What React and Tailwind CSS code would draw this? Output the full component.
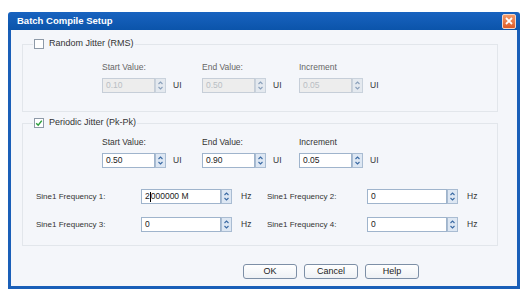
import React from 'react';

const font = { fontFamily: '"Liberation Sans", Arial, sans-serif' };

function Spinner({ disabled }) {
  return (
    <div
      className={`w-[11px] h-full flex flex-col items-center justify-center border ${
        disabled ? 'border-[#c9d2dc] bg-[#e4e9ef]' : 'border-[#a9bcd2] bg-[#dde7f3]'
      }`}
    >
      <svg width="7" height="11" viewBox="0 0 7 11" fill="none">
        <path d="M1.5 4 L3.5 2 L5.5 4" stroke={disabled ? '#8aa0bb' : '#3b6aa3'} strokeWidth="1.1" />
        <path d="M1.5 7 L3.5 9 L5.5 7" stroke={disabled ? '#8aa0bb' : '#3b6aa3'} strokeWidth="1.1" />
      </svg>
    </div>
  );
}

function SpinBox({ value, width = 'w-[53px]', disabled, children }) {
  return (
    <div className="flex h-[15px]">
      <div
        className={`${width} h-full border flex items-center pl-[3px] text-[8.5px] ${
          disabled
            ? 'bg-[#ededed] border-[#c6ced8] text-[#b9bec4]'
            : 'bg-white border-[#9fb4cc] text-[#222]'
        }`}
      >
        {children || value}
      </div>
      <Spinner disabled={disabled} />
    </div>
  );
}

function Checkbox({ checked }) {
  return (
    <div className="w-[10px] h-[10px] border border-[#8e9aa8] bg-white flex items-center justify-center">
      {checked && (
        <svg width="8" height="8" viewBox="0 0 8 8" fill="none">
          <path d="M1.2 4.2 L3.2 6.2 L6.8 1.6" stroke="#2e9f3e" strokeWidth="1.5" />
        </svg>
      )}
    </div>
  );
}

function ValueRow({ values, disabled }) {
  const labels = ['Start Value:', 'End Value:', 'Increment'];
  const widths = ['w-[100px]', 'w-[97px]', 'w-[90px]'];
  return (
    <div className="flex pl-[79px]">
      {labels.map((l, i) => (
        <div key={l} className={`${widths[i]} flex flex-col`}>
          <div className={`text-[8.5px] leading-[10px] mb-[6px] ${disabled ? 'text-[#666]' : 'text-[#333]'}`}>{l}</div>
          <div className="flex items-center">
            <SpinBox value={values[i]} disabled={disabled} />
            <span className="ml-[7px] text-[8.5px] text-[#333]">UI</span>
          </div>
        </div>
      ))}
    </div>
  );
}

function FreqField({ label, value, children, labelW }) {
  return (
    <div className="flex items-center">
      <div className={`${labelW} text-[8px] text-[#333]`}>{label}</div>
      <SpinBox value={value} width="w-[80px]">{children}</SpinBox>
      <span className="ml-[9px] text-[8.5px] text-[#333]">Hz</span>
    </div>
  );
}

function Button({ children }) {
  return (
    <button className="w-[54px] h-[15px] rounded-[3px] border border-[#7d8fa6] bg-gradient-to-b from-white to-[#eef1f5] text-[9px] text-[#222] flex items-center justify-center">
      {children}
    </button>
  );
}

export default function App() {
  return (
    <div className="w-[531px] h-[301px] bg-white pt-[12px] pl-[8px]" style={font}>
      <div className="w-[512px] h-[277px] flex flex-col rounded-t-[3px] overflow-hidden">
        <div className="h-[18px] bg-gradient-to-b from-[#1863c0] to-[#0b54aa] flex items-center justify-between pl-[9px] pr-[4px]">
          <span className="text-white font-bold text-[9.5px]">Batch Compile Setup</span>
          <div className="w-[14px] h-[15px] rounded-[2px] border border-[#f3d6c6] bg-gradient-to-b from-[#f39a68] to-[#dd5a26] flex items-center justify-center">
            <svg width="8" height="8" viewBox="0 0 8 8">
              <path d="M1 1 L7 7 M7 1 L1 7" stroke="white" strokeWidth="1.8" />
            </svg>
          </div>
        </div>
        <div className="flex-1 border-x-[3px] border-b-[3px] border-[#1a5fb8] bg-[#f4f6fa] flex flex-col">
          <fieldset className="ml-[11px] mt-[8px] w-[476px] border border-[#e2e6eb] pb-[18px]">
            <legend className="ml-[10px] px-[1px] flex items-center gap-[5px] h-[12px]">
              <Checkbox />
              <span className="text-[9px] text-[#333]">Random Jitter (RMS)</span>
            </legend>
            <div className="pt-[12px]">
              <ValueRow values={['0.10', '0.50', '0.05']} disabled />
            </div>
          </fieldset>

          <fieldset className="ml-[11px] mt-[5px] w-[476px] border border-[#e2e6eb] pb-[13px]">
            <legend className="ml-[10px] px-[1px] flex items-center gap-[5px] h-[12px]">
              <Checkbox checked />
              <span className="text-[9px] text-[#333]">Periodic Jitter (Pk-Pk)</span>
            </legend>
            <div className="pt-[8px]">
              <ValueRow values={['0.50', '0.90', '0.05']} />
            </div>
            <div className="pl-[13px] mt-[21px] flex flex-col gap-[13px]">
              <div className="flex">
                <div className="w-[231px]">
                  <FreqField label="Sine1 Frequency 1:" labelW="w-[105px]">
                    <span>2</span>
                    <span className="w-px h-[10px] bg-black" />
                    <span>000000 M</span>
                  </FreqField>
                </div>
                <FreqField label="Sine1 Frequency 2:" value="0" labelW="w-[100px]" />
              </div>
              <div className="flex">
                <div className="w-[231px]">
                  <FreqField label="Sine1 Frequency 3:" value="0" labelW="w-[105px]" />
                </div>
                <FreqField label="Sine1 Frequency 4:" value="0" labelW="w-[100px]" />
              </div>
            </div>
          </fieldset>

          <div className="mt-[18px] pl-[232px] flex gap-[7px]">
            <Button>OK</Button>
            <Button>Cancel</Button>
            <Button>Help</Button>
          </div>
        </div>
      </div>
    </div>
  );
}
